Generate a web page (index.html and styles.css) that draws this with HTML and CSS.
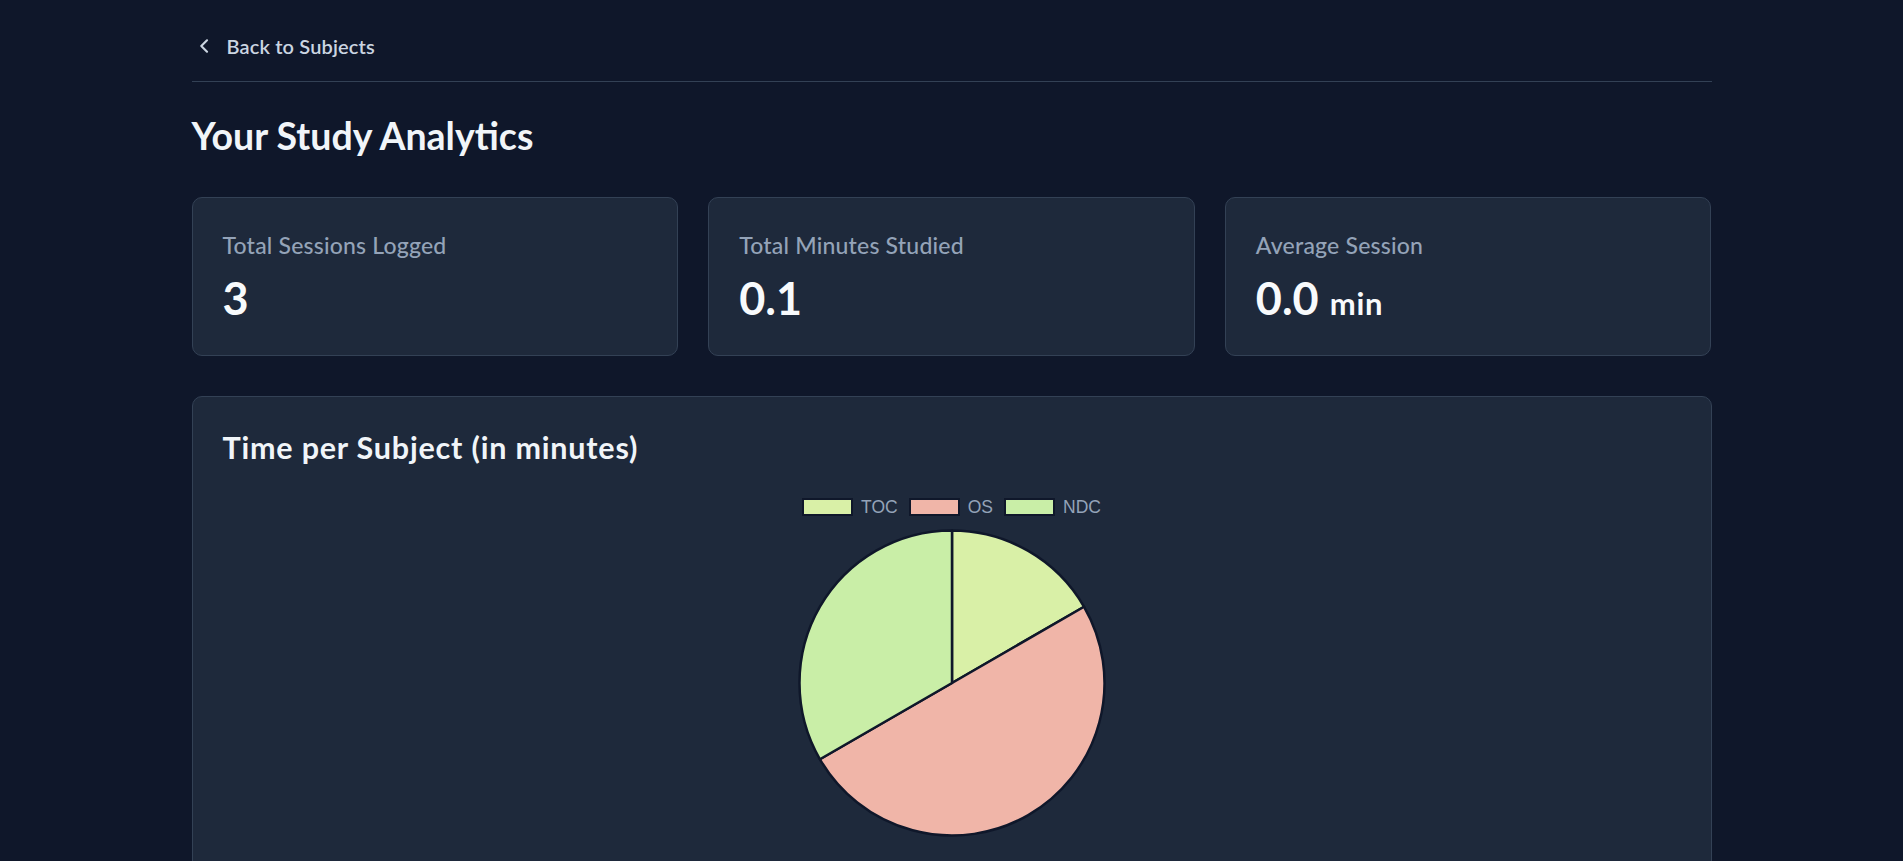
FILE: index.html
```html
<!DOCTYPE html>
<html lang="en">
<head>
<meta charset="utf-8">
<title>Your Study Analytics</title>
<link rel="stylesheet" href="styles.css">
</head>
<body>
<div class="page">
  <header class="topbar">
    <a class="back-link" href="#">
      <svg class="chev" width="10" height="14" viewBox="0 0 10 14" aria-hidden="true"><path d="M8 1.3 L2.3 7 L8 12.7" fill="none" stroke="currentColor" stroke-width="2.1" stroke-linecap="round" stroke-linejoin="round"/></svg>
      <span>Back to Subjects</span>
    </a>
  </header>

  <h1 class="page-title">Your Study Analytics</h1>

  <section class="stats">
    <div class="stat-card">
      <div class="stat-label">Total Sessions Logged</div>
      <div class="stat-value">3</div>
    </div>
    <div class="stat-card">
      <div class="stat-label">Total Minutes Studied</div>
      <div class="stat-value">0.1</div>
    </div>
    <div class="stat-card">
      <div class="stat-label">Average Session</div>
      <div class="stat-value">0.0 <span class="stat-unit">min</span></div>
    </div>
  </section>

  <section class="chart-card">
    <h2 class="chart-title">Time per Subject (in minutes)</h2>
    <div class="chart">
      <div class="legend">
        <div class="legend-item"><span class="swatch sw-toc"></span><span class="legend-text">TOC</span></div>
        <div class="legend-item"><span class="swatch sw-os"></span><span class="legend-text">OS</span></div>
        <div class="legend-item"><span class="swatch sw-ndc"></span><span class="legend-text">NDC</span></div>
      </div>
      <svg class="pie" width="312" height="312" viewBox="0 0 312 312" aria-label="Pie chart">
        <path class="slice-toc" d="M156 156 L156 3.5 A152.5 152.5 0 0 1 288.07 79.75 Z"/>
        <path class="slice-os" d="M156 156 L288.07 79.75 A152.5 152.5 0 1 1 23.93 232.25 Z"/>
        <path class="slice-ndc" d="M156 156 L23.93 232.25 A152.5 152.5 0 0 1 156 3.5 Z"/>
      </svg>
    </div>
  </section>
</div>
</body>
</html>
```

FILE: styles.css
```css
* { box-sizing: border-box; }

html, body {
  margin: 0;
  padding: 0;
  background: #0f172a;
}

body {
  font-family: Lato, "Noto Sans", "Liberation Sans", sans-serif;
  color: #f1f5f9;
}

.page {
  width: 1520px;
  margin: 0 auto;
  padding-bottom: 60px;
}

.topbar {
  padding-top: 31px;
  padding-bottom: 20px;
  border-bottom: 1px solid #334155;
}

.back-link {
  display: flex;
  align-items: center;
  height: 30px;
  color: #cbd5e1;
  text-decoration: none;
  font-size: 20px;
  font-weight: 600;
  line-height: 30px;
  letter-spacing: 0.15px;
}

.chev {
  display: block;
  margin-left: 7px;
  margin-right: 18px;
}

.page-title {
  margin: 31px 0 39px;
  font-size: 37.5px;
  line-height: 45px;
  font-weight: 700;
  color: #f1f5f9;
}

.stats {
  display: grid;
  grid-template-columns: repeat(3, 1fr);
  gap: 30px;
}

.stat-card {
  background: #1e293b;
  border: 1px solid #334155;
  border-radius: 10px;
  padding: 30px 30px 27px;
}

.stat-label {
  font-size: 23px;
  line-height: 35px;
  font-weight: 500;
  letter-spacing: 0.2px;
  color: #94a3b8;
}

.stat-value {
  margin-top: 10px;
  font-size: 45px;
  line-height: 50px;
  font-weight: 700;
  color: #f8fafc;
}

.stat-unit {
  font-size: 31px;
  font-weight: 700;
  letter-spacing: 0.8px;
}

.chart-card {
  margin-top: 40px;
  background: #1e293b;
  border: 1px solid #334155;
  border-radius: 10px;
  padding: 30px 30px 60px;
}

.chart-title {
  margin: 0;
  font-size: 30.5px;
  line-height: 40px;
  font-weight: 700;
  letter-spacing: 0.8px;
  color: #f1f5f9;
}

.chart {
  margin-top: 18px;
  display: flex;
  flex-direction: column;
  align-items: center;
  height: 420px;
}

.legend {
  display: flex;
  gap: 11px;
  padding-top: 13px;
  font-family: "Liberation Sans", Arial, sans-serif;
  font-size: 17.5px;
  line-height: 18px;
  color: #94a3b8;
}

.legend-item {
  display: flex;
  align-items: center;
}

.swatch {
  display: block;
  width: 51px;
  height: 18px;
  border: 2.5px solid #0f172a;
  margin-right: 8px;
}

.sw-toc { background: #d9f0a7; }
.sw-os { background: #f0b5a8; }
.sw-ndc { background: #c9eea7; }

.pie {
  display: block;
  margin-top: 11px;
}

.pie path {
  stroke: #0f172a;
  stroke-width: 2.5;
  stroke-linejoin: round;
}

.slice-toc { fill: #d9f0a7; }
.slice-os { fill: #f0b5a8; }
.slice-ndc { fill: #c9eea7; }
```
